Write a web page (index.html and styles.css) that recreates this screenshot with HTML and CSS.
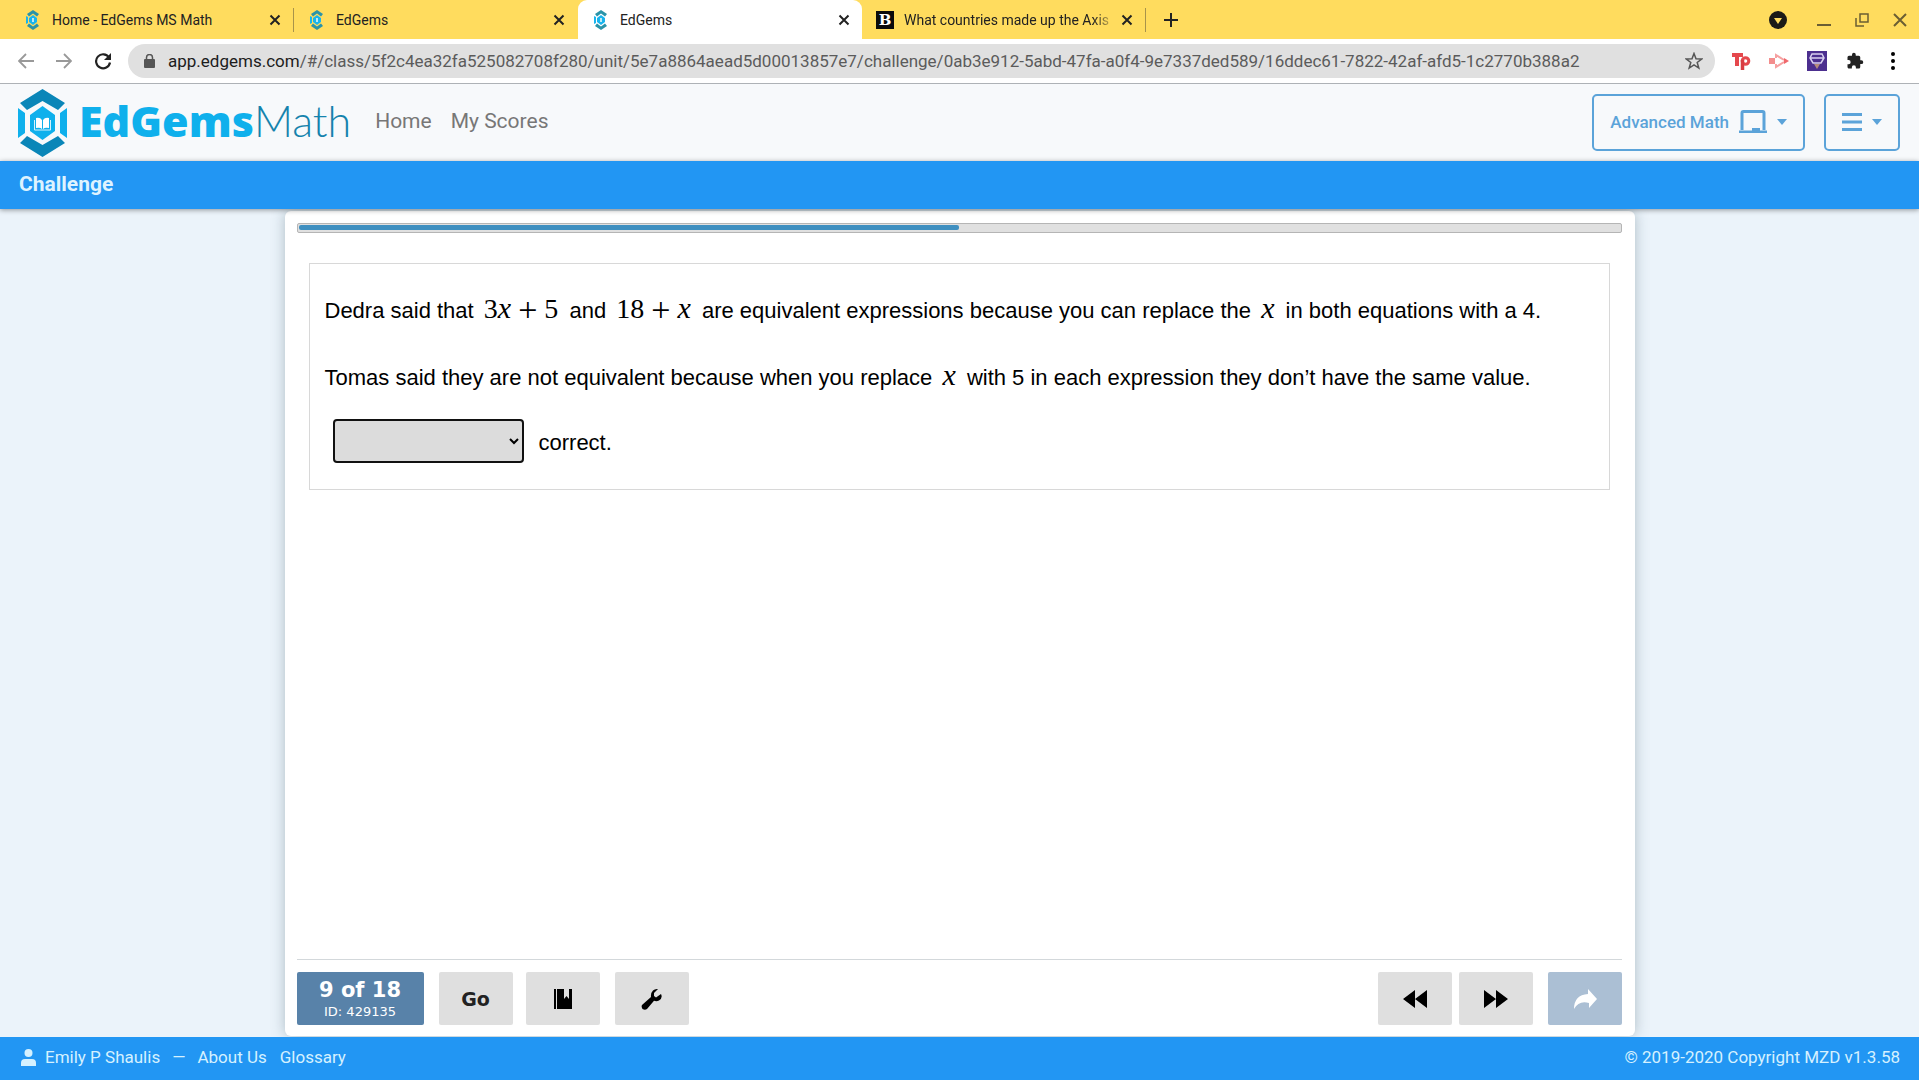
FILE: index.html
```html
<!DOCTYPE html>
<html lang="en">
<head>
  <meta charset="UTF-8">
  <title>EdGems</title>
  <link rel="stylesheet" href="styles.css">
</head>
<body>
  <svg width="0" height="0" class="defs" aria-hidden="true">
    <symbol id="gem" viewBox="0 0 49 68">
      <path fill="#0a86b8" d="M24.500 0 47 14 40 21 24.500 12 9 21 2 14zM24.500 68 47 54 40 47 24.500 56 9 47 2 54z"/>
      <path fill="#0fb0ec" d="M0 19 7 24V44L0 49zM49 19 42 24V44L49 49zM24.500 17 37 26V42L24.500 51 12 42V26z"/>
      <path fill="#fff" d="M18 29q4-1 6 2v9q-2-2-6-1zM31 29q-4-1-6 2v9q2-2 6-1z"/>
      <path fill="none" stroke="#d5f1fb" d="M16.500 31v10h16V31"/>
    </symbol>
    <symbol id="gem-small" viewBox="0 0 14 20">
      <path fill="#2a93a8" d="M7 0 13 4 11 6.500 7 3.500 3 6.500 1 4zM7 20 13 16 11 13.500 7 16.500 3 13.500 1 16z"/>
      <path fill="#18b4ee" d="M0 6 2 7V13L0 14zM7 5 11 8V12L7 15 3 12V8z"/>
      <path fill="#bfe9f2" d="M6 8h2v4H6z"/>
    </symbol>
    <symbol id="close" viewBox="0 0 12 12">
      <path d="M1.500 1.500 10.500 10.500M10.500 1.500 1.500 10.500" stroke="currentColor" stroke-width="2" fill="none"/>
    </symbol>
  </svg>

  <div class="tab-strip">
    <div class="tab">
      <svg class="favicon"><use href="#gem-small"/></svg>
      <span class="tab-title">Home - EdGems MS Math</span>
      <button class="tab-close" aria-label="Close tab"><svg><use href="#close"/></svg></button>
    </div>
    <div class="tab">
      <svg class="favicon"><use href="#gem-small"/></svg>
      <span class="tab-title">EdGems</span>
      <button class="tab-close" aria-label="Close tab"><svg><use href="#close"/></svg></button>
    </div>
    <div class="tab active">
      <svg class="favicon"><use href="#gem-small"/></svg>
      <span class="tab-title">EdGems</span>
      <button class="tab-close" aria-label="Close tab"><svg><use href="#close"/></svg></button>
    </div>
    <div class="tab">
      <span class="favicon-b">B</span>
      <span class="tab-title fade">What countries made up the Axis</span>
      <button class="tab-close" aria-label="Close tab"><svg><use href="#close"/></svg></button>
    </div>
    <button class="new-tab" aria-label="New tab">
      <svg width="16" height="16" viewBox="0 0 16 16"><path d="M8 1v14M1 8h14" stroke="#222" stroke-width="2"/></svg>
    </button>
    <div class="window-buttons">
      <button aria-label="Search tabs"><svg width="18" height="18" viewBox="0 0 18 18"><circle cx="9" cy="9" r="9" fill="#1b1a17"/><path d="M5 7h8l-4 6z" fill="#ffdc5e"/></svg></button>
      <button aria-label="Minimize"><svg width="14" height="14" viewBox="0 0 14 14"><path d="M0 12h14" stroke="#6b5e33" stroke-width="2"/></svg></button>
      <button aria-label="Restore"><svg width="14" height="14" viewBox="0 0 14 14"><path d="M5 1h8v8H5zM1 5v8h8" stroke="#6b5e33" stroke-width="1.500" fill="none"/></svg></button>
      <button aria-label="Close"><svg width="14" height="14" viewBox="0 0 14 14"><path d="M1 1 13 13M13 1 1 13" stroke="#6b5e33" stroke-width="2"/></svg></button>
    </div>
  </div>

  <div class="toolbar">
    <button aria-label="Back"><svg width="16" height="16" viewBox="0 0 16 16"><path d="M16 8H2M8 1 1 8l7 7" stroke="#999" stroke-width="1.800" fill="none"/></svg></button>
    <button aria-label="Forward"><svg width="16" height="16" viewBox="0 0 16 16"><path d="M0 8h14M8 1l7 7-7 7" stroke="#999" stroke-width="1.800" fill="none"/></svg></button>
    <button aria-label="Reload"><svg width="18" height="18" viewBox="0 0 18 18"><path d="M15 5.500A7 7 0 1 0 16 10.500" stroke="#222" stroke-width="2.200" fill="none"/><path d="M17 1v7h-7z" fill="#222"/></svg></button>
    <div class="address">
      <svg width="11" height="14" viewBox="0 0 11 14"><rect y="5" width="11" height="9" rx="1" fill="#555"/><path d="M2.500 6V3.500a3 3 0 0 1 6 0V6" stroke="#555" stroke-width="1.500" fill="none"/></svg>
      <span class="url"><b>app.edgems.com</b>/#/class/5f2c4ea32fa525082708f280/unit/5e7a8864aead5d00013857e7/challenge/0ab3e912-5abd-47fa-a0f4-9e7337ded589/16ddec61-7822-42af-afd5-1c2770b388a2</span>
      <button aria-label="Bookmark"><svg width="18" height="18" viewBox="0 0 18 18"><path d="M9 1.500l2 5.300 5.700.2-4.500 3.500 1.600 5.500L9 12.800 4.200 16l1.600-5.500L1.300 7 7 6.800z" stroke="#555" stroke-width="1.500" fill="none"/></svg></button>
    </div>
    <div class="extensions">
      <button aria-label="Teleparty"><svg width="19" height="19" viewBox="0 0 19 19"><path d="M0 3h11M5 3v11" stroke="#e5484d" stroke-width="4" fill="none"/><circle cx="13.500" cy="9" r="3.300" stroke="#e5484d" stroke-width="3" fill="none"/><path d="M10.500 8v10" stroke="#d93c42" stroke-width="3.500"/></svg></button>
      <button aria-label="Screen recorder"><svg width="20" height="16" viewBox="0 0 20 16"><path d="M0 5h6v6H0z" fill="#f38d8d"/><path d="M7 5V2l8 5M7 11v3l8-5" stroke="#f6a1a1" stroke-width="2" fill="none"/><path d="M15 5l5 3-5 3z" fill="#f0686c"/></svg></button>
      <button aria-label="Reader"><svg width="20" height="20" viewBox="0 0 20 20"><path d="M0 0h20v20H0z" fill="#4c2f8f"/><path d="M5 3h10l2 4-3 5H6L3 7zM4 7h12" stroke="#d9d0f0" stroke-width="1.500" fill="none"/><path d="M7 13h6l-3 5z" fill="#b58a7c"/></svg></button>
      <button aria-label="Extensions"><svg width="18" height="18" viewBox="0 0 24 24"><path fill="#222" d="M20.500 11H19V7a2 2 0 0 0-2-2h-4V3.500a2.500 2.500 0 0 0-5 0V5H4a2 2 0 0 0-2 2v3.800h1.500a2.700 2.700 0 0 1 0 5.400H2V20c0 1.100.900 2 2 2h3.800v-1.500a2.700 2.700 0 0 1 5.400 0V22H17a2 2 0 0 0 2-2v-4h1.500a2.500 2.500 0 0 0 0-5z"/></svg></button>
      <button aria-label="Menu"><svg width="4" height="18" viewBox="0 0 4 18"><circle cx="2" cy="2" r="2"/><circle cx="2" cy="9" r="2"/><circle cx="2" cy="16" r="2"/></svg></button>
    </div>
  </div>

  <nav class="navbar">
    <a href="#" class="brand">
      <svg class="brand-gem"><use href="#gem"/></svg>
      <span class="brand-name">EdGems<span>Math</span></span>
    </a>
    <a href="#" class="nav-link">Home</a>
    <a href="#" class="nav-link">My Scores</a>
    <div class="nav-buttons">
      <button class="outline-button">Advanced Math
        <svg width="28" height="24" viewBox="0 0 28 24"><path d="M3 20V3q0-1.500 1.500-1.500h19Q25 1.500 25 3v17" stroke="currentColor" stroke-width="3" fill="none"/><path d="M0 20.500h13V18h8v2.500h7V23H0z" fill="currentColor"/></svg>
        <span class="caret"></span>
      </button>
      <button class="outline-button" aria-label="Menu">
        <svg width="20" height="18" viewBox="0 0 20 18"><path d="M0 1.500h20M0 9h20M0 16.500h20" stroke="currentColor" stroke-width="3"/></svg>
        <span class="caret"></span>
      </button>
    </div>
  </nav>
  <header class="title-bar">Challenge</header>

  <main>
    <section class="card">
      <div class="progress"><div class="progress-fill" style="width: 50%"></div></div>

      <div class="question">
        <p>Dedra said that <span class="math">3<i>x</i> <span class="op">+</span> 5</span> and <span class="math">18 <span class="op">+</span> <i>x</i></span> are equivalent expressions because you can replace the <span class="math"><i>x</i></span> in both equations with a 4.</p>
        <p>Tomas said they are not equivalent because when you replace <span class="math"><i>x</i></span> with 5 in each expression they don’t have the same value.</p>
        <div class="answer">
          <select id="answer" aria-label="Answer"><option></option></select>
          <label for="answer">correct.</label>
        </div>
      </div>

      <div class="controls">
        <div class="counter"><strong>9 of 18</strong><span>ID: 429135</span></div>
        <button class="control go">Go</button>
        <button class="control book" aria-label="Reference"><svg width="18" height="22" viewBox="0 0 18 22"><path d="M0 1h2v20H0zM3 1h7v10l2.500-3 2.500 3V1h3v20H3z"/></svg></button>
        <button class="control tools" aria-label="Tools"><svg width="22" height="22" viewBox="0 0 22 22"><path d="M17 1l-4 4v3l2 1.500 5-3.500q2 4-2 6.500-2.500 1.200-5 .200L6 21q-2 1.500-4.500 0Q0 18.500 1 17l9-8Q9.500 5 12 2.500 14 .500 17 1z"/></svg></button>
        <div class="pager">
          <button class="control" aria-label="Previous"><svg width="24" height="18" viewBox="0 0 24 18"><path d="M12 0v18L0 9zM24 0v18L12 9z"/></svg></button>
          <button class="control" aria-label="Next"><svg width="24" height="18" viewBox="0 0 24 18"><path d="M0 0v18l12-9zM12 0v18l12-9z"/></svg></button>
          <button class="control submit" aria-label="Submit"><svg width="24" height="20" viewBox="0 0 24 20"><path fill="#fff" d="M15 0l9 10-8 9v-5Q6 11 1 20 1 6 15 5z"/></svg></button>
        </div>
      </div>
    </section>
  </main>

  <footer>
    <svg width="15" height="17" viewBox="0 0 15 17"><circle cx="7.500" cy="4" r="4"/><path d="M0 17v-3q0-4 4-4h7q4 0 4 4v3z"/></svg>
    <a href="#">Emily P Shaulis</a>
    <span class="dash">—</span>
    <a href="#">About Us</a>
    <a href="#" class="glossary">Glossary</a>
    <span class="copyright">© 2019-2020 Copyright MZD v1.3.58</span>
  </footer>
</body>
</html>
```
FILE: styles.css
```css
* {
  box-sizing: border-box;
}

body {
  margin: 0;
  height: 100vh;
  display: flex;
  flex-direction: column;
  background: #ebf3fa;
  font-family: Roboto, sans-serif;
  color: #222;
}

button {
  border: 0;
  padding: 0;
  background: none;
  color: inherit;
  font-family: inherit;
  display: flex;
  align-items: center;
  justify-content: center;
}

a {
  color: inherit;
  text-decoration: none;
}

svg {
  display: block;
  flex: none;
}

.defs {
  position: absolute;
}

/* browser tabs */
.tab-strip {
  display: flex;
  align-items: center;
  height: 39px;
  padding: 0 12px 0 10px;
  background: #ffdc5e;
}

.tab {
  display: flex;
  align-items: center;
  width: 284px;
  height: 24px;
  padding: 0 12px 0 16px;
  border-right: 1px solid #a8934a;
}

.tab.active {
  height: 39px;
  background: #fff;
  border-radius: 9px 9px 0 0;
  border-right: 0;
}

.tab:has(+ .active) {
  border-right-color: transparent;
}

.favicon {
  width: 14px;
  height: 20px;
  margin-right: 12px;
}

.favicon-b {
  width: 18px;
  height: 18px;
  margin: 0 10px 0 -2px;
  background: #0b0b0b;
  color: #fff;
  font: bold 15px/18px "DejaVu Serif", serif;
  text-align: center;
}

.tab-title {
  flex: 1;
  font-size: 14px;
  white-space: nowrap;
}

.tab-title.fade {
  -webkit-mask-image: linear-gradient(to right, #000 87%, transparent 98%);
}

.tab-close svg {
  width: 12px;
  height: 12px;
}

.new-tab {
  margin-left: 17px;
}

.window-buttons {
  display: flex;
  gap: 24px;
  margin-left: auto;
}

.window-buttons button:first-child {
  margin-right: 6px;
}

/* address bar */
.toolbar {
  display: flex;
  align-items: center;
  height: 45px;
  padding: 0 16px 0 18px;
  background: #fff;
  border-bottom: 1px solid #aeb2b6;
  gap: 22px;
}

.address {
  flex: 1;
  display: flex;
  align-items: center;
  height: 34px;
  margin-left: -6px;
  padding: 0 12px 0 16px;
  border-radius: 17px;
  background: #e0e0e0;
  color: #5b5b5b;
}

.url {
  flex: 1;
  margin-left: 13px;
  font-size: 17px;
  white-space: nowrap;
}

.url b {
  font-weight: 400;
  color: #1c1c1c;
}

.extensions {
  display: flex;
  align-items: center;
  gap: 18px;
  margin-left: -6px;
}

.extensions button {
  width: 20px;
}

/* site header */
.navbar {
  display: flex;
  align-items: center;
  height: 77px;
  padding: 0 19px 0 18px;
  background: #f7f9fb;
  color: #777;
}

.brand {
  display: flex;
  align-items: center;
  gap: 12px;
  margin-right: 24px;
}

.brand-gem {
  width: 49px;
  height: 68px;
}

.brand-name {
  padding-bottom: 3px;
  font: 800 43px/56px "Open Sans", sans-serif;
  color: #0fb0ec;
}

.brand-name span {
  font-family: Lato, sans-serif;
  font-weight: 300;
  color: #1583ad;
}

.nav-link {
  margin-right: 19px;
  padding-bottom: 4px;
  font-size: 21px;
}

.nav-buttons {
  display: flex;
  gap: 19px;
  margin-left: auto;
}

.outline-button {
  height: 57px;
  padding: 0 16px 2px;
  border: 2px solid #5ba3d9;
  border-radius: 5px;
  color: #5ba3d9;
  font-size: 17px;
  font-weight: 500;
  gap: 10px;
}

.caret {
  border: 5px solid transparent;
  border-top: 6px solid currentColor;
  border-bottom: 0;
}

.title-bar {
  position: relative;
  height: 48px;
  padding-left: 19px;
  background: #2296f3;
  color: #def3ff;
  font-size: 21px;
  font-weight: 700;
  line-height: 46px;
  box-shadow: 0 1px 5px rgba(0, 0, 0, 0.4);
}

/* question card */
main {
  flex: 1;
  display: flex;
  justify-content: center;
  padding: 2px 20px 1px;
}

.card {
  flex: 1;
  display: flex;
  flex-direction: column;
  max-width: 1350px;
  padding: 12px 13px 11px 12px;
  border-radius: 6px;
  background: #fff;
  box-shadow: 0 0 14px rgba(60, 90, 100, 0.35);
}

.progress {
  height: 10px;
  padding: 1px;
  border: 1px solid #b5b5b5;
  border-radius: 2px;
  background: #e0e0e0;
}

.progress-fill {
  height: 5px;
  border-radius: 2px;
  background: #3f8fc0;
}

.question {
  margin: 30px 12px 0;
  padding: 33px 15px 26px;
  border: 1px solid #d8d8d8;
  color: #000;
  font-family: "Liberation Sans", Arial, sans-serif;
  font-size: 22px;
  line-height: 27px;
}

.question p {
  margin: 0 0 40px;
}

.math {
  margin: 0 5px 0 4px;
  font-family: "Liberation Serif", "Times New Roman", serif;
  font-size: 28px;
  line-height: 20px;
}

.math i {
  font-size: 30px;
}

.math .op {
  font-size: 34px;
  line-height: 16px;
  vertical-align: -3px;
}

.answer {
  display: flex;
  align-items: center;
  gap: 15px;
  margin: -12px 0 0 8px;
}

.answer select {
  width: 191px;
  height: 44px;
  border: 2px solid #111;
  border-radius: 4px;
  background: #dcdcdc;
  font-size: 20px;
}

.answer label {
  padding-top: 2px;
}

.controls {
  display: flex;
  margin-top: auto;
  padding-top: 12px;
  border-top: 1px solid #d3d8db;
  font-family: "DejaVu Sans", Verdana, sans-serif;
}

.counter {
  width: 127px;
  height: 53px;
  margin-right: 15px;
  padding-top: 6px;
  border-radius: 2px;
  background: #5882a9;
  color: #fff;
  text-align: center;
}

.counter strong,
.counter span {
  display: block;
  font-size: 21px;
  line-height: 25px;
}

.counter span {
  font-size: 13px;
  line-height: 18px;
}

.control {
  width: 74px;
  height: 53px;
  border-radius: 2px;
  background: #dfdfdf;
}

.go {
  margin-right: 13px;
  font-size: 19px;
  font-weight: bold;
}

.book {
  margin-right: 15px;
}

.pager {
  display: flex;
  gap: 7px;
  margin-left: auto;
}

.submit {
  margin-left: 8px;
  background: #abbfd4;
}

footer {
  position: relative;
  display: flex;
  align-items: center;
  height: 43px;
  padding: 0 19px 3px 21px;
  background: #2296f3;
  color: #d5f1ff;
  font-size: 17px;
}

footer svg {
  margin-right: 9px;
  fill: currentColor;
}

.dash {
  margin: 0 12px;
}

.glossary {
  margin-left: 13px;
}

.copyright {
  margin-left: auto;
}
```
